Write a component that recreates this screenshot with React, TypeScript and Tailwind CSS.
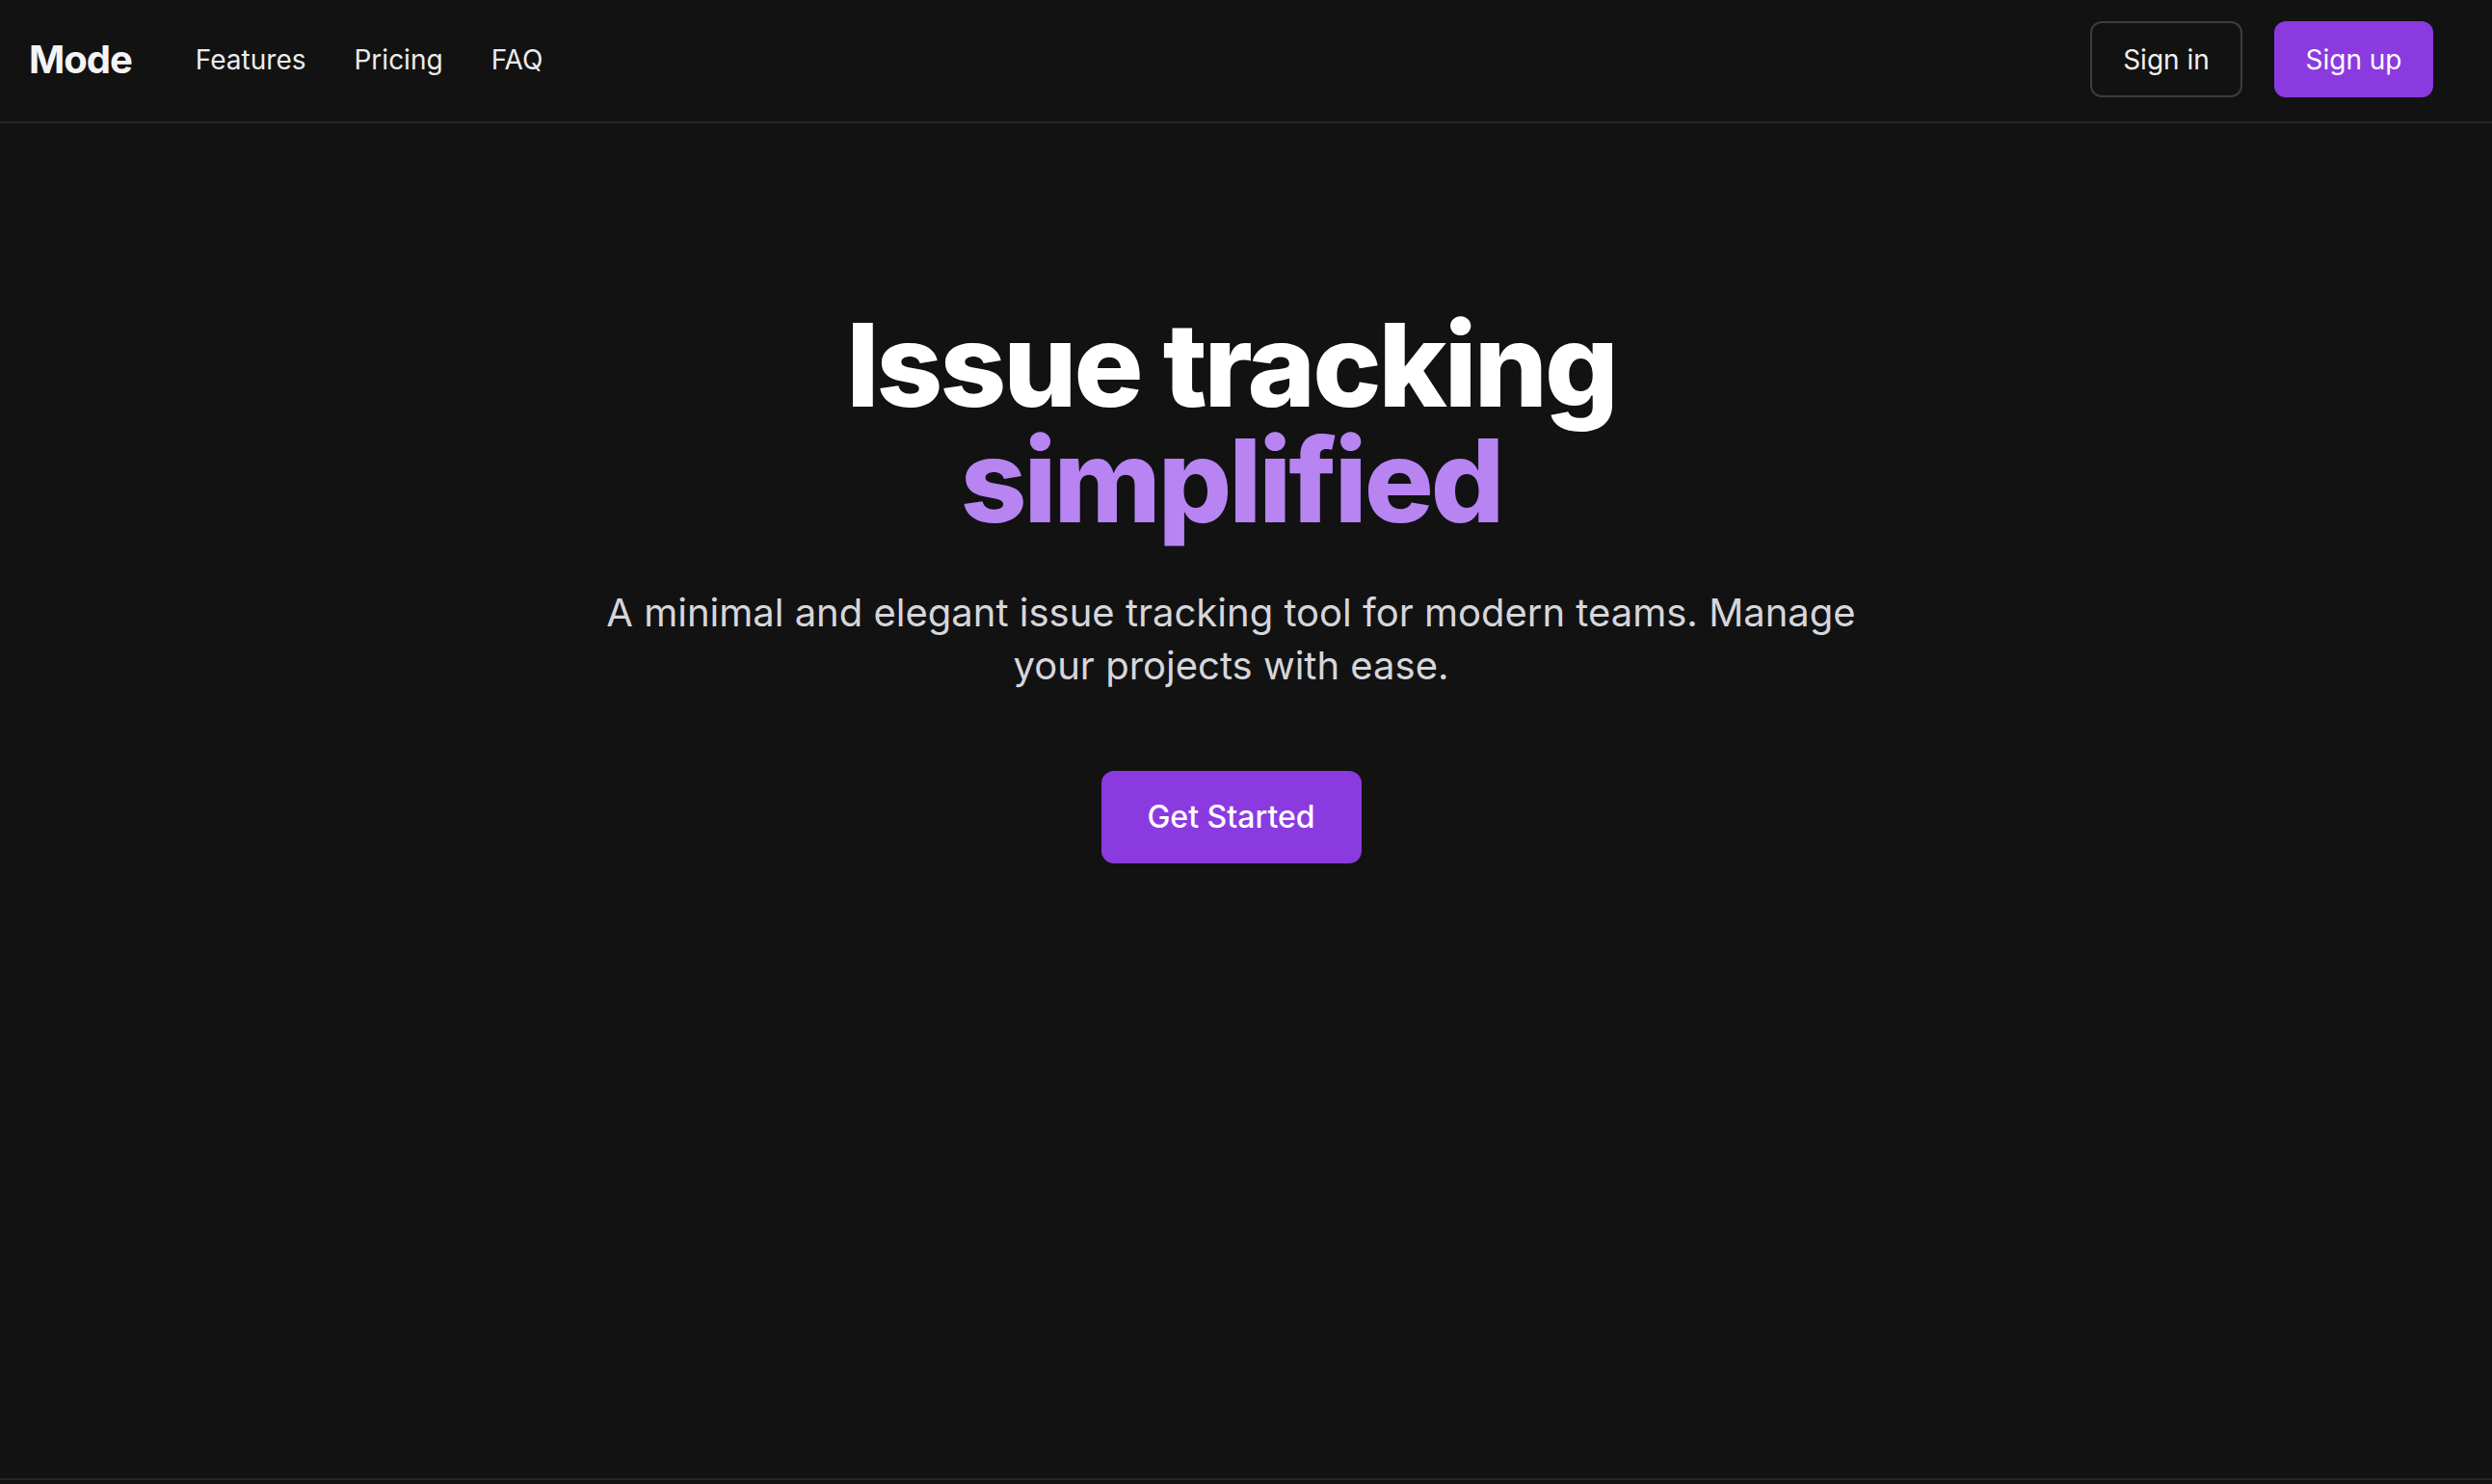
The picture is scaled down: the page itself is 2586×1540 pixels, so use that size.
import React from "react";

/*
 * LANDING
 * ───────
 * Top bar with logo, nav links and auth buttons,
 * then a centered hero with a call to action.
 */

const NAV_LINKS = ["Features", "Pricing", "FAQ"];

function Header() {
  return (
    <header className="border-b-2 border-[#262626]">
      <div className="flex h-[126px] items-center justify-between pb-[3px] pl-[30px] pr-[61px]">
        <div className="flex items-center gap-[66px]">
          <a className="text-[40px] font-bold tracking-tight text-[#f4f4f5]">Mode</a>
          <nav className="flex items-center gap-[50px]">
            {NAV_LINKS.map((link) => (
              <a key={link} className="text-[28px] text-[#ececec]">
                {link}
              </a>
            ))}
          </nav>
        </div>
        <div className="flex items-center gap-[33px]">
          <button className="h-[79px] w-[158px] rounded-[12px] border-2 border-[#3d3d3d] text-[28px] text-[#f0f0f0]">
            Sign in
          </button>
          <button className="h-[79px] w-[165px] rounded-[12px] bg-[#8b3ae0] text-[28px] text-white">
            Sign up
          </button>
        </div>
      </div>
    </header>
  );
}

function Hero() {
  return (
    <section className="flex flex-col items-center pr-[31px] pt-[191px] text-center">
      <h1 className="text-[120px] font-extrabold leading-none tracking-tight text-white">
        Issue tracking
        <br />
        <span className="text-[#b784f2]">simplified</span>
      </h1>
      <p className="mt-[49px] max-w-[1330px] text-[40px] leading-[55px] text-[#d6d6dc]">
        A minimal and elegant issue tracking tool for modern teams. Manage your projects with ease.
      </p>
      <button className="mt-[82px] h-[96px] w-[270px] rounded-[13px] bg-[#8b3ae0] text-[32px] font-medium text-white">
        Get Started
      </button>
    </section>
  );
}

export default function App() {
  return (
    <div
      className="flex min-h-screen flex-col bg-[#121212]"
      style={{ fontFamily: "Inter, 'Noto Sans', sans-serif" }}
    >
      <Header />
      <main className="h-[1406px]">
        <Hero />
      </main>
      <footer className="h-[60px] border-t-2 border-[#262626]" />
    </div>
  );
}
